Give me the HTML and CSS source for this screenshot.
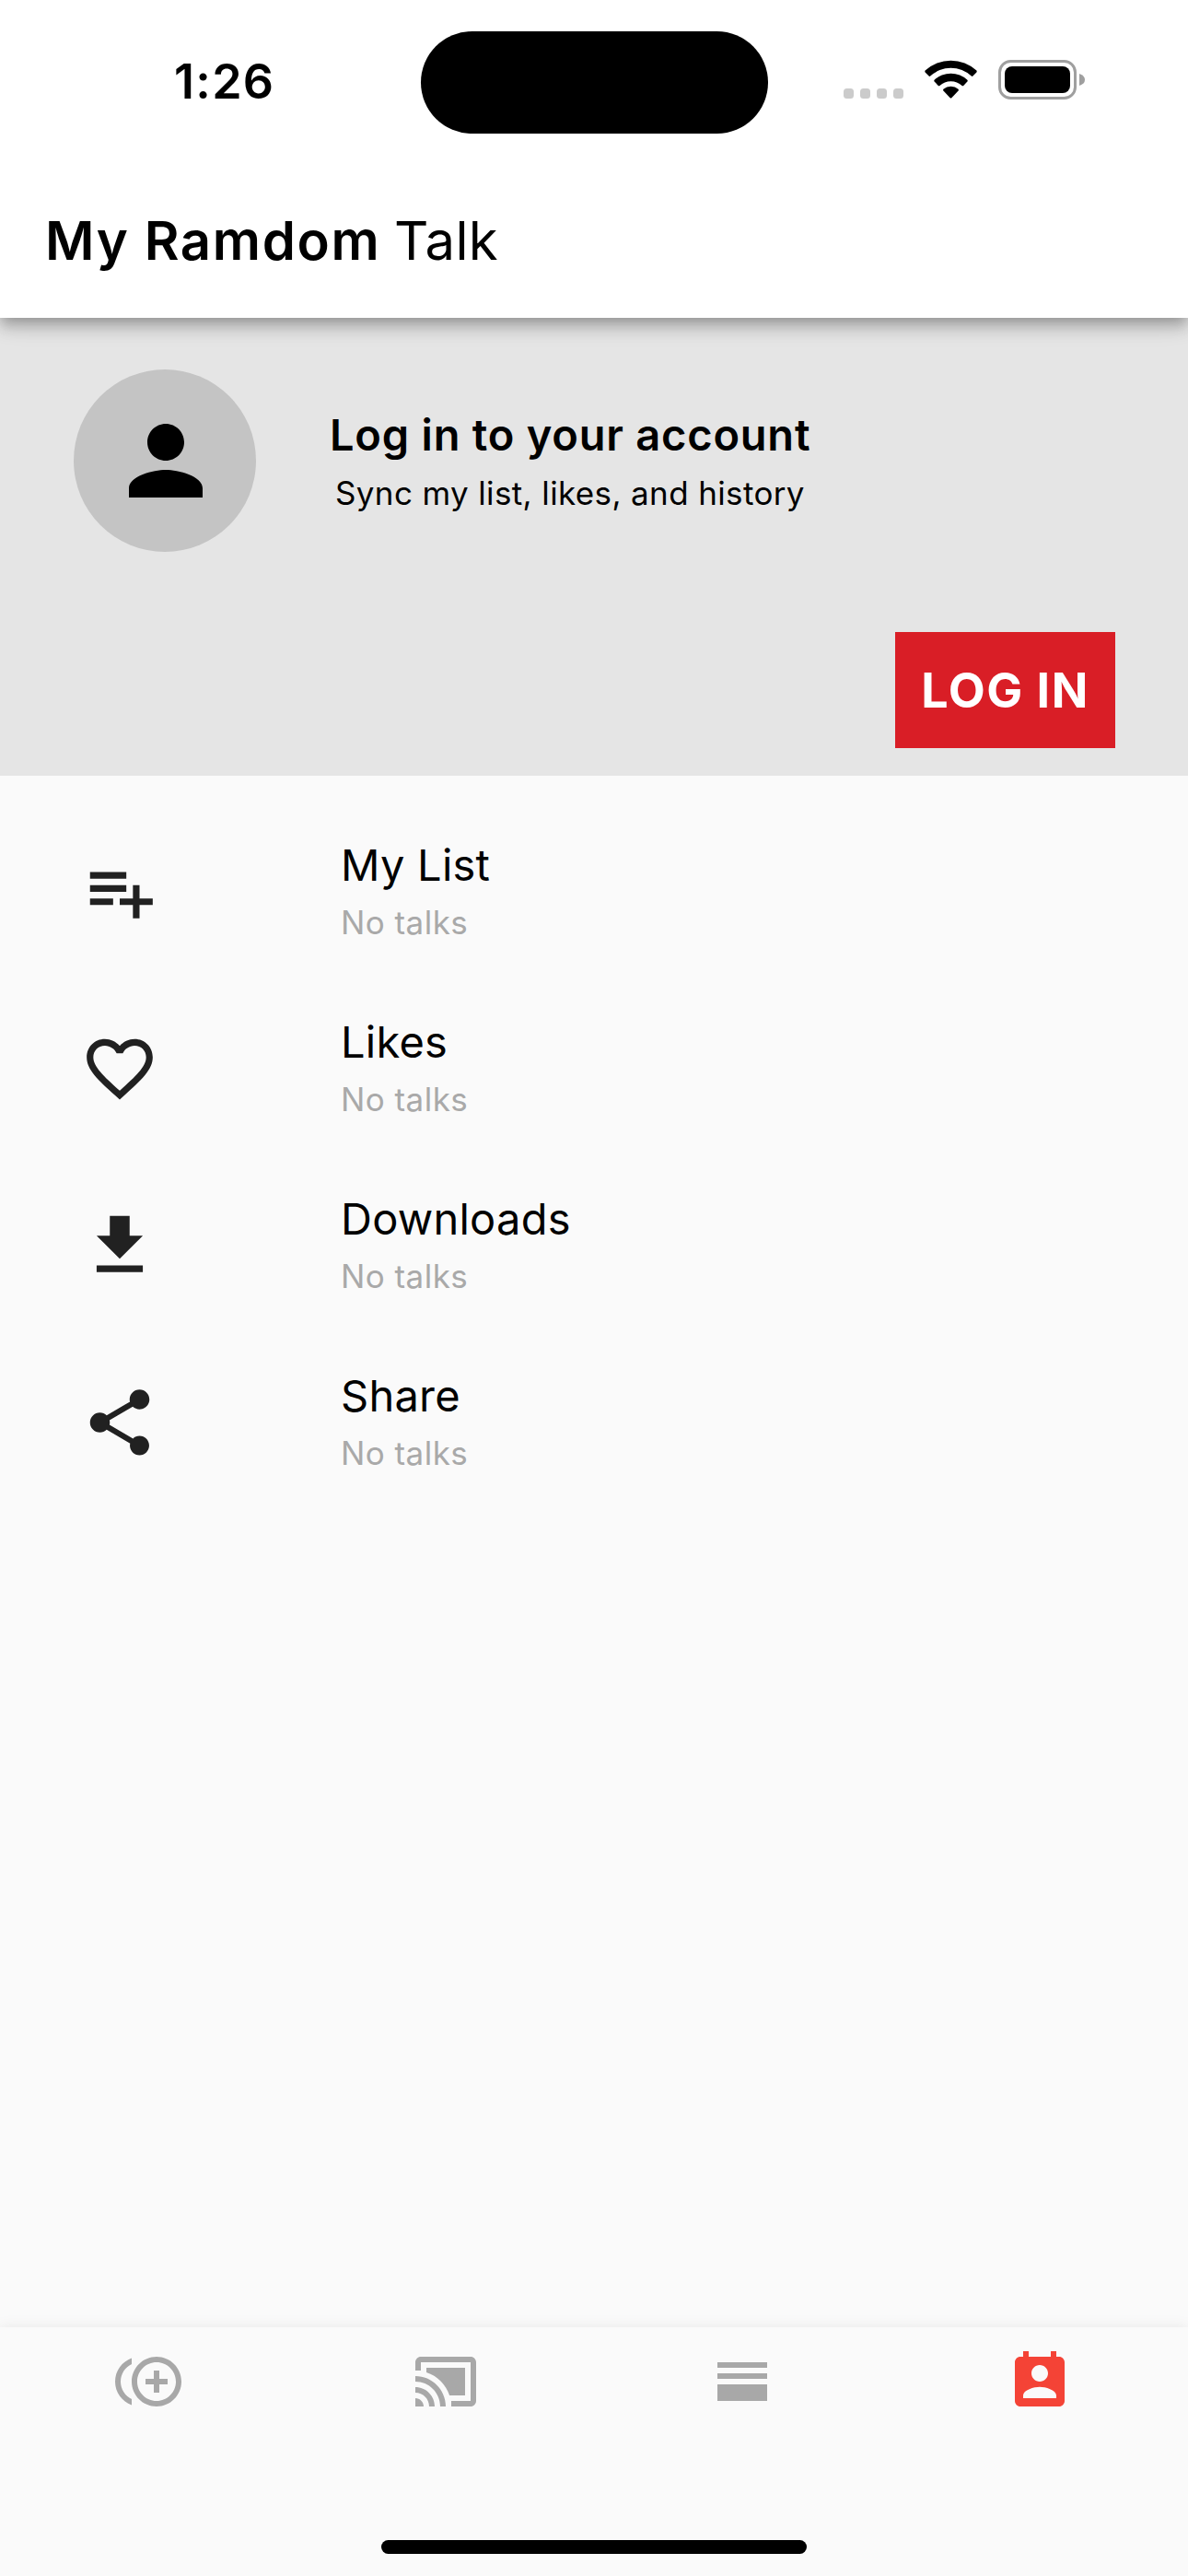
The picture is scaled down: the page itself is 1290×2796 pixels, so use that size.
FILE: index.html
```
<!DOCTYPE html>
<html lang="en">
<head>
<meta charset="utf-8">
<title>My Ramdom Talk</title>
<link rel="stylesheet" href="styles.css">
</head>
<body>
<div class="screen">
  <header class="appbar">
    <div class="status">
      <span class="clock">1:26</span>
      <div class="island"></div>
      <div class="indicators">
        <svg class="signal" width="66" height="11" viewBox="0 0 66 11" fill="#cbcbcb"><rect width="11" height="11" rx="3.5"/><rect x="18" width="11" height="11" rx="3.5"/><rect x="36" width="11" height="11" rx="3.5"/><rect x="54" width="11" height="11" rx="3.5"/></svg>
        <svg class="wifi" width="57" height="42" viewBox="0 0 57 42"><path d="M0.6 11.6A41 41 0 0 1 56.4 11.6Q57 12.6 56.4 13.4L52.4 17.6Q51.6 18.3 50.8 17.6A32.5 32.5 0 0 0 6.2 17.6Q5.4 18.3 4.6 17.6L.6 13.4Q0 12.6.6 11.6Z"/><path d="M10.6 21.8A26 26 0 0 1 46.4 21.8Q47.1 22.7 46.4 23.5L42.2 27.9Q41.4 28.5 40.6 27.9A18 18 0 0 0 16.4 27.9Q15.6 28.5 14.8 27.9L10.6 23.5Q9.9 22.7 10.6 21.8Z"/><path d="M20.4 31.8A12.5 12.5 0 0 1 36.6 31.8Q37.3 32.6 36.6 33.5L29.3 41.2Q28.5 42 27.7 41.2L20.4 33.5Q19.7 32.6 20.4 31.8Z"/></svg>
        <svg class="battery" width="95" height="43" viewBox="0 0 95 43"><rect x="1.5" y="1.5" width="82" height="40" rx="12" fill="none" stroke="#9f9f9f" stroke-width="3"/><rect x="7" y="7" width="71" height="29" rx="8"/><path d="M88 15Q94 17 94 21.5T88 28Z" fill="#9f9f9f"/></svg>
      </div>
    </div>
    <h1 class="title"><span class="title-strong">My Ramdom</span> <span class="title-light">Talk</span></h1>
  </header>

  <section class="account">
    <div class="account-row">
      <div class="avatar">
        <svg width="120" height="120" viewBox="0 0 24 24"><path d="M12 12c2.21 0 4-1.79 4-4s-1.79-4-4-4-4 1.79-4 4 1.79 4 4 4zm0 2c-2.67 0-8 1.34-8 4v2h16v-2c0-2.66-5.33-4-8-4z"/></svg>
      </div>
      <div class="account-text">
        <div class="account-title">Log in to your account</div>
        <div class="account-note">Sync my list, likes, and history</div>
      </div>
    </div>
    <button class="login">LOG IN</button>
  </section>

  <main class="list">
    <div class="row">
      <svg class="row-icon" viewBox="0 0 24 24"><path d="M14 10H3v2h11v-2zm0-4H3v2h11V6zm4 8v-4h-2v4h-4v2h4v4h2v-4h4v-2h-4zM3 16h7v-2H3v2z"/></svg>
      <div class="row-text"><div class="row-title">My List</div><div class="row-note">No talks</div></div>
    </div>
    <div class="row">
      <svg class="row-icon" viewBox="0 0 24 24"><path d="M16.5 3c-1.74 0-3.41.81-4.5 2.09C10.91 3.81 9.24 3 7.5 3 4.42 3 2 5.42 2 8.5c0 3.78 3.4 6.86 8.55 11.54L12 21.35l1.45-1.32C18.6 15.36 22 12.28 22 8.5 22 5.42 19.58 3 16.5 3zm-4.4 15.55l-.1.1-.1-.1C7.14 14.24 4 11.39 4 8.5 4 6.5 5.5 5 7.5 5c1.54 0 3.04.99 3.57 2.36h1.87C13.46 5.99 14.96 5 16.5 5c2 0 3.5 1.5 3.5 3.5 0 2.89-3.14 5.74-7.9 10.05z"/></svg>
      <div class="row-text"><div class="row-title">Likes</div><div class="row-note">No talks</div></div>
    </div>
    <div class="row">
      <svg class="row-icon" viewBox="0 0 24 24"><path d="M19 9h-4V3H9v6H5l7 7 7-7zM5 18v2h14v-2H5z"/></svg>
      <div class="row-text"><div class="row-title">Downloads</div><div class="row-note">No talks</div></div>
    </div>
    <div class="row">
      <svg class="row-icon" viewBox="0 0 24 24"><path d="M18 16.08c-.76 0-1.44.3-1.96.77L8.91 12.7c.05-.23.09-.46.09-.7s-.04-.47-.09-.7l7.05-4.11c.54.5 1.25.81 2.04.81 1.66 0 3-1.34 3-3s-1.34-3-3-3-3 1.34-3 3c0 .24.04.47.09.7L8.04 9.81C7.5 9.31 6.79 9 6 9c-1.66 0-3 1.34-3 3s1.34 3 3 3c.79 0 1.5-.31 2.04-.81l7.12 4.16c-.05.21-.08.43-.08.65 0 1.61 1.31 2.92 2.92 2.92s2.92-1.31 2.92-2.92-1.31-2.92-2.92-2.92z"/></svg>
      <div class="row-text"><div class="row-title">Share</div><div class="row-note">No talks</div></div>
    </div>
  </main>

  <nav class="tabs">
    <div class="tab-row">
      <a class="tab"><svg viewBox="0 0 24 24"><path d="M16 8h-2v3h-3v2h3v3h2v-3h3v-2h-3zM2 12c0-2.79 1.64-5.2 4.01-6.32V3.52C2.52 4.76 0 8.09 0 12s2.52 7.24 6.01 8.48v-2.16C3.64 17.2 2 14.79 2 12zm13-9c-4.96 0-9 4.04-9 9s4.04 9 9 9 9-4.04 9-9-4.04-9-9-9zm0 16c-3.86 0-7-3.14-7-7s3.14-7 7-7 7 3.14 7 7-3.14 7-7 7z"/></svg></a>
      <a class="tab"><svg viewBox="0 0 24 24"><path d="M1 18v3h3c0-1.66-1.34-3-3-3zm0-4v2c2.76 0 5 2.24 5 5h2c0-3.87-3.13-7-7-7zm18-7H5v1.63c3.96 1.28 7.09 4.41 8.37 8.37H19V7zM1 10v2c4.97 0 9 4.03 9 9h2c0-6.08-4.93-11-11-11zm20-7H3c-1.1 0-2 .9-2 2v3h2V5h18v14h-7v2h7c1.1 0 2-.9 2-2V5c0-1.1-.9-2-2-2z"/></svg></a>
      <a class="tab"><svg viewBox="0 0 24 24"><path d="M3 5h18v2H3zM3 9h18v2H3zM3 13h18v6H3z"/></svg></a>
      <a class="tab tab-active"><svg viewBox="0 0 24 24"><path d="M19 3h-1V1h-2v2H8V1H6v2H5c-1.11 0-2 .9-2 2v14c0 1.1.89 2 2 2h14c1.1 0 2-.9 2-2V5c0-1.1-.9-2-2-2zm-7 3c1.66 0 3 1.34 3 3s-1.34 3-3 3-3-1.34-3-3 1.34-3 3-3zm6 12H6v-1c0-2 4-3.1 6-3.1s6 1.1 6 3.1v1z"/></svg></a>
    </div>
    <div class="home-bar"></div>
  </nav>
</div>
</body>
</html>
```
FILE: styles.css
```
* { box-sizing: border-box; }
body { margin: 0; font-family: Inter, "Liberation Sans", sans-serif; color: #000; }
.screen { width: 1290px; height: 2796px; display: flex; flex-direction: column; background: #fafafa; overflow: hidden; }

.appbar { position: relative; z-index: 1; flex: none; height: 345px; background: #fff; box-shadow: 0 6px 12px -3px rgba(0,0,0,.2), 0 12px 15px 0 rgba(0,0,0,.14), 0 3px 30px 0 rgba(0,0,0,.12); }
.status { height: 177px; padding: 33px 111px 0 0; display: grid; grid-template-columns: 456.5px 377px 1fr; align-items: start; }
.clock { padding-left: 189px; margin-top: 25px; font-size: 52px; line-height: 62px; font-weight: 600; letter-spacing: 1.3px; }
.island { height: 111px; margin-top: .5px; border-radius: 55.5px; background: #000; }
.indicators { display: flex; align-items: flex-end; justify-content: flex-end; height: 75px; }
.signal { margin: 0 22px 1px 0; }
.wifi { margin: 0 23px 1px 0; }
.title { margin: 49px 0 0; padding-left: 49px; font-size: 58px; line-height: 70px; font-weight: 600; white-space: nowrap; }
.title-strong { letter-spacing: 1.65px; }
.title-light { font-weight: 400; letter-spacing: .3px; }

.account { flex: none; height: 497px; background: #e5e5e5; padding: 56px 79px 0 79.5px; display: flex; flex-direction: column; }
.account-row { display: flex; }
.avatar { width: 198px; height: 198px; border-radius: 50%; background: #c4c4c4; display: flex; align-items: center; justify-content: center; padding-left: 3px; }
.account-text { margin-left: 80.5px; padding-top: 42px; white-space: nowrap; }
.account-title { font-size: 47px; line-height: 58px; font-weight: 600; letter-spacing: .78px; }
.account-note { padding-left: 6px; font-size: 35px; line-height: 44px; margin-top: 12px; letter-spacing: .37px; }
.login { align-self: flex-end; margin-top: 87px; width: 239px; height: 126px; border: 0; padding: 2px 0 0; background: #d91e26; color: #fff; font: 700 52px/62px Inter, "Liberation Sans", sans-serif; letter-spacing: 1.5px; white-space: nowrap; }

.list { flex: 1; padding-top: 30px; }
.row { height: 192px; padding-left: 87px; display: flex; align-items: center; }
.row-icon { width: 86px; height: 86px; fill: #212121; }
.row-text { margin-left: 197px; padding-bottom: 3px; }
.row-title { font-size: 47px; line-height: 58px; letter-spacing: .25px; }
.row-note { font-size: 35px; line-height: 44px; margin-top: 11px; color: #a9a9a9; letter-spacing: .45px; }

.tabs { flex: none; height: 270px; background: #fafafa; box-shadow: 0 0 15px rgba(0,0,0,.08); display: flex; flex-direction: column; align-items: center; }
.tab-row { width: 100%; height: 231px; padding-top: 23px; display: flex; }
.tab { flex: 1; display: flex; justify-content: center; }
.tab svg { width: 72px; height: 72px; fill: #a8a8a8; }
.tab-active svg { fill: #f44336; }
.home-bar { width: 462px; height: 15px; border-radius: 8px; background: #000; }
```
